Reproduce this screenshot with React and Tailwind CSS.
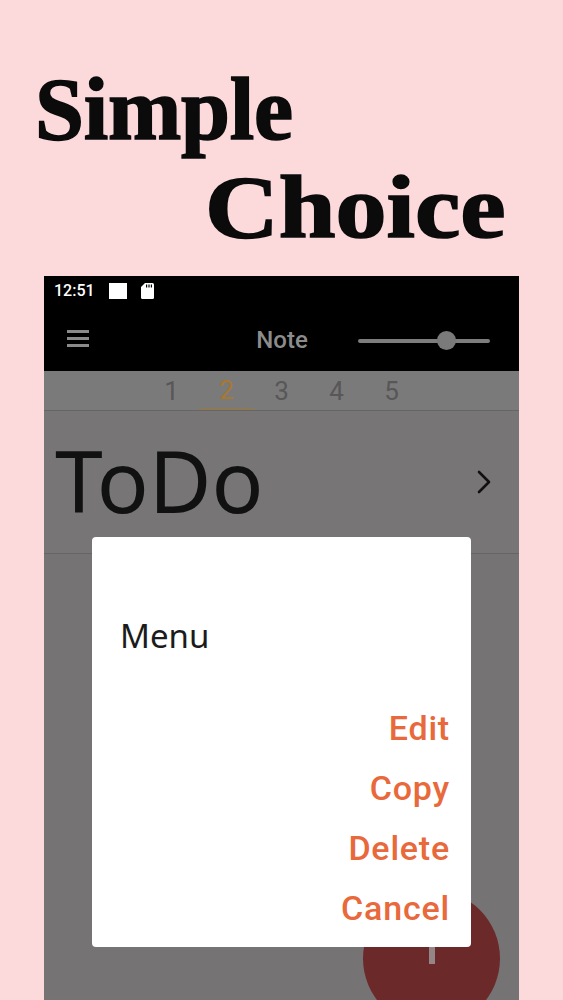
import React from 'react';

const tabs = ['1', '2', '3', '4', '5'];
const actions = ['Edit', 'Copy', 'Delete', 'Cancel'];

const SdCardIcon = () => (
  <svg width="13" height="16" viewBox="0 0 13 16" className="block">
    <path d="M4 0H11.5A1.5 1.5 0 0 1 13 1.5V14.5A1.5 1.5 0 0 1 11.5 16H1.5A1.5 1.5 0 0 1 0 14.5V4Z" fill="#fff" />
    <rect x="5" y="1.5" width="1.2" height="3" fill="#000" />
    <rect x="7.4" y="1.5" width="1.2" height="3" fill="#000" />
    <rect x="9.8" y="1.5" width="1.2" height="3" fill="#000" />
  </svg>
);

const Chevron = () => (
  <svg width="16" height="24" viewBox="0 0 16 24" className="block">
    <path d="M3 2L13 12L3 22" fill="none" stroke="#111" strokeWidth="2.6" strokeLinecap="round" strokeLinejoin="round" />
  </svg>
);

export default function App() {
  return (
    <div className="flex h-[1000px] w-[563px] flex-col overflow-hidden bg-[#fcdadb]">
      {/* headline */}
      <div className="h-[276px] shrink-0 pt-[61px] font-['Liberation_Serif',serif] text-[88px] font-bold leading-[98px] text-[#0b0b0b] [-webkit-text-stroke:1.6px_#0b0b0b]">
        <div className="pl-[35px] tracking-[-0.2px]">Simple</div>
        <div className="pl-[205px]">
          <span className="inline-block origin-left scale-x-[1.16]">Choice</span>
        </div>
      </div>

      {/* phone screen */}
      <div className="relative ml-[44px] flex w-[475px] flex-1 flex-col overflow-hidden bg-[#757374] font-['Roboto',sans-serif]">
        <div className="flex h-[30px] items-center gap-[14px] bg-black pl-[10px]">
          <span className="text-[16px] font-medium leading-none text-white">12:51</span>
          <span className="h-[16px] w-[18px] bg-white" />
          <SdCardIcon />
        </div>

        <div className="flex h-[65px] items-center bg-black">
          <div className="ml-[23px] flex w-[22px] flex-col gap-[4.5px]">
            <span className="h-[2.5px] bg-[#8a8a8a]" />
            <span className="h-[2.5px] bg-[#8a8a8a]" />
            <span className="h-[2.5px] bg-[#8a8a8a]" />
          </div>
          <div className="ml-[155px] w-[76px] pt-[3px] text-center text-[24px] font-medium text-[#8c8c8c]">Note</div>
          <div className="relative ml-[38px] mt-[4px] h-[4px] w-[132px] rounded-full bg-[#7d7d7d]">
            <span className="absolute left-[79px] top-[-8px] h-[19px] w-[19px] rounded-full bg-[#7a7a7a]" />
          </div>
        </div>

        <div className="flex h-[39px] bg-[#7b7a7a] pl-[100px]">
          {tabs.map((t) => (
            <div
              key={t}
              className={`flex w-[55px] items-center justify-center text-[26px] leading-none ${
                t === '2' ? 'border-b-2 border-[#8b7a55] text-[#a8782f]' : 'text-[#575757]'
              }`}
            >
              {t}
            </div>
          ))}
        </div>

        <div className="flex h-[144px] items-center justify-between border-y border-[#666566] bg-[#777576] pl-[11px] pr-[27px]">
          <span className="pb-[4px] font-['Noto_Sans',sans-serif] text-[86px] leading-none text-[#111]">ToDo</span>
          <Chevron />
        </div>

        {/* floating action button behind the dim */}
        <div className="absolute left-[319px] top-[614px] flex h-[137px] w-[137px] items-start justify-center rounded-full bg-[#6b2a29]">
          <span className="mt-[30px] h-[44px] w-[6px] bg-[#948686]" />
        </div>

        {/* dialog */}
        <div className="absolute left-[48px] top-[261px] flex h-[410px] w-[379px] flex-col rounded-[4px] bg-white">
          <div className="pl-[28px] pt-[79px] font-['Noto_Sans',sans-serif] text-[33px] leading-[40px] text-[#1b1b1b]">Menu</div>
          <div className="mt-[42px] flex flex-col items-end pr-[21px]">
            {actions.map((a) => (
              <span key={a} className="text-[34px] font-medium leading-[60px] tracking-[0.8px] text-[#e8693b]">
                {a}
              </span>
            ))}
          </div>
        </div>
      </div>
    </div>
  );
}
